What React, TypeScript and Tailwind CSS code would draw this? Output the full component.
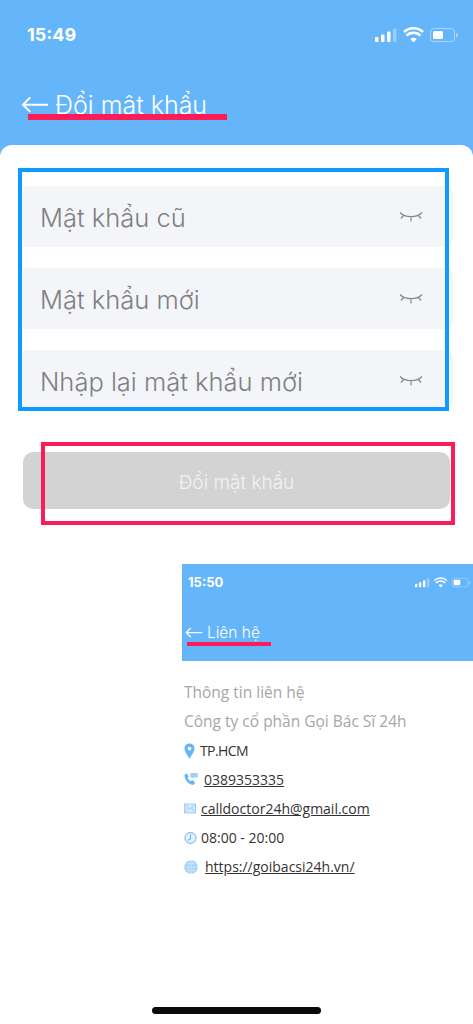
const INTER = "font-['Inter','Liberation_Sans',sans-serif]";
const OPEN = "font-['Open_Sans','Liberation_Sans',sans-serif]";

function StatusIcons({ small }: { small?: boolean }) {
  return (
    <svg width={small ? 56 : 84} height={small ? 11 : 16} viewBox="0 0 84 16" className="block">
      <g fill="#fff">
        <rect x="0" y="10" width="3.5" height="5" rx="1" />
        <rect x="6" y="7.5" width="3.5" height="7.5" rx="1" />
        <rect x="12" y="4.5" width="3.5" height="10.5" rx="1" />
        <rect x="18" y="1.5" width="3.5" height="13.5" rx="1" fill="#fff" opacity="0.35" />
        <path d="M38.5 15.5l-3.2-3.4a4.6 4.6 0 0 1 6.4 0z" />
      </g>
      <path d="M31.5 8.6a10 10 0 0 1 14 0M29 5a14 14 0 0 1 19 0" stroke="#fff" strokeWidth="2.4" fill="none" />
      <rect x="55.5" y="1.5" width="24" height="13" rx="3.5" fill="none" stroke="#fff" strokeOpacity="0.45" />
      <rect x="58" y="4" width="10" height="8" rx="1.5" fill="#fff" />
      <rect x="81" y="6" width="1.6" height="4.5" rx="0.8" fill="#fff" opacity="0.45" />
    </svg>
  );
}

function BackArrow({ width }: { width: number }) {
  return (
    <svg width={width} height={width * 0.62} viewBox="0 0 29 18" fill="none" stroke="#fff" strokeWidth="2" className="block shrink-0">
      <path d="M28 9H2M9.5 1.5L2 9l7.5 7.5" />
    </svg>
  );
}

function EyeClosed() {
  return (
    <svg width="24" height="16" viewBox="0 0 24 16" fill="none" stroke="#85878a" strokeWidth="1.2" className="block shrink-0">
      <path d="M1 3.5C6 9 18 9 23 3.5M4.5 6.5L2 9.5M19.5 6.5L22 9.5M12 8.5V12.5" />
    </svg>
  );
}

function Field({ label }: { label: string }) {
  return (
    <div className="flex h-[61px] items-center justify-between rounded-r-lg bg-[#f4f5f8] pl-[17px] pr-[30px]">
      <span className={`${INTER} relative top-[2px] text-[25.5px] font-light text-[#7f8082]`}>{label}</span>
      <EyeClosed />
    </div>
  );
}

const PinIcon = (
  <svg width="11" height="16" viewBox="0 0 11 16" className="block">
    <path fillRule="evenodd" fill="#64b5f9" d="M5.5 0.5C2.6.5.5 2.7.5 5.5c0 3.5 5 10 5 10s5-6.500 5-10C10.500 2.700 8.400.5 5.500.5zm0 3.200a1.900 1.900 0 1 1 0 3.800 1.900 1.900 0 0 1 0-3.800z" />
  </svg>
);

const PhoneIcon = (
  <svg width="15" height="15" viewBox="0 0 15 15" className="block">
    <path fill="#64b5f9" d="M.5 2.500 3 1l2.200 3.300-1.400 1.300c.7 1.700 2 3 3.700 3.800l1.300-1.300 3.200 2.300-1.500 2.600C6.200 14.500.3 8 .5 2.500z" />
    <path fill="#9fd0f8" d="M7.500.5h6.500a.8.800 0 0 1 .8.800v3.200a.8.800 0 0 1-.8.800H10l-1.500 1.500V5.300h-1a.8.800 0 0 1-.8-.8V1.300a.8.800 0 0 1 .8-.8z" />
  </svg>
);

const MailIcon = (
  <svg width="12" height="11" viewBox="0 0 12 11" className="block">
    <rect x=".5" y="1" width="11" height="9" fill="#d5eafc" stroke="#9fd0f8" />
    <path d="M.5 1.500 6 6l5.500-4.500M.5 9.500 4.300 5M11.500 9.500 7.700 5" fill="none" stroke="#8cc6f7" strokeWidth=".8" />
  </svg>
);

const ClockIcon = (
  <svg width="13" height="14" viewBox="0 0 13 14" className="block">
    <circle cx="6.500" cy="7" r="5.500" fill="#e6f3fe" stroke="#8cc6f7" strokeWidth="1.300" />
    <path d="M6.500 3.500V7.500L4 9.500" fill="none" stroke="#64b5f9" strokeWidth="1.100" />
  </svg>
);

const GlobeIcon = (
  <svg width="14" height="14" viewBox="0 0 14 14" className="block">
    <circle cx="7" cy="7" r="6.800" fill="#9fd0f8" />
    <path d="M.5 7h13M1.500 3.800h11M1.500 10.200h11M7 .3v13.400M7 .3C3 3 3 11 7 13.700M7 .3c4 2.700 4 10.700 0 13.400" fill="none" stroke="#e6f3fe" strokeWidth=".6" />
  </svg>
);

const rows = [
  { icon: PinIcon, text: 'TP.HCM', link: false, cls: 'ml-[2px] -tracking-[0.6px]' },
  { icon: PhoneIcon, text: '0389353335', link: true, cls: 'ml-[6px]' },
  { icon: MailIcon, text: 'calldoctor24h@gmail.com', link: true, cls: 'ml-[3px]' },
  { icon: ClockIcon, text: '08:00 - 20:00', link: false, cls: 'ml-[3px]' },
  { icon: GlobeIcon, text: 'https://goibacsi24h.vn/', link: true, cls: 'ml-[7px]' },
];

export default function App() {
  return (
    <div className="relative h-[1024px] w-[473px] overflow-hidden bg-[#64b5f9]">
      {/* status bar + title */}
      <div className="flex h-[145px] flex-col bg-[#64b5f9] pl-[21px] pr-[14px]">
        <div className="flex items-center justify-between pl-[6px] pt-[23px]">
          <span className={`${INTER} text-[18px] font-bold leading-[24px] text-white`}>15:49</span>
          <StatusIcons />
        </div>
        <div className="mt-[42px] flex items-center gap-[6px]">
          <BackArrow width={28} />
          <span className={`${INTER} text-[25px] font-light leading-[32px] text-white`}>Đổi mật khẩu</span>
        </div>
      </div>

      <div className="h-[879px] rounded-t-[12px] bg-white pt-[41px]">
        <div className="ml-[23px] mr-[20px] flex flex-col gap-[21px]">
          <Field label="Mật khẩu cũ" />
          <Field label="Mật khẩu mới" />
          <Field label="Nhập lại mật khẩu mới" />
        </div>

        <div className="ml-[23px] mt-[41px] flex h-[57px] w-[427px] items-center justify-center rounded-[10px] bg-[#d3d3d3]">
          <span className={`${INTER} relative top-[3px] text-[19px] font-light text-[#f2f2f2]`}>Đổi mật khẩu</span>
        </div>

        {/* inset screenshot */}
        <div className="ml-[182px] mt-[55px]">
          <div className="flex h-[97px] flex-col bg-[#64b5f9] pl-[6px] pr-[2px]">
            <div className="flex items-center justify-between pt-[8px]">
              <span className={`${INTER} text-[13px] font-bold leading-[20px] text-white`}>15:50</span>
              <StatusIcons small />
            </div>
            <div className="-ml-[3px] mt-[30px] flex items-center gap-[4px]">
              <BackArrow width={18} />
              <span className={`${INTER} text-[15.5px] font-light leading-[22px] text-white`}>Liên hệ</span>
            </div>
          </div>

          <div className={`${OPEN} pl-[2px] pt-[17px]`}>
            <p className="text-[15.5px] leading-[29px] text-[#a6a6a6]">Thông tin liên hệ</p>
            <p className="whitespace-nowrap text-[15.5px] leading-[29px] text-[#a6a6a6]">Công ty cổ phần Gọi Bác Sĩ 24h</p>
            {rows.map((r) => (
              <div key={r.text} className="flex h-[29px] items-center">
                <span className="flex w-[14px] justify-start">{r.icon}</span>
                <span className={`${r.cls} whitespace-nowrap text-[14px] text-[#333] ${r.link ? 'underline' : ''}`}>{r.text}</span>
              </div>
            ))}
          </div>
        </div>
      </div>

      {/* annotations drawn on the picture */}
      <div className="absolute left-[28px] top-[114px] h-[6px] w-[199px] bg-[#fb1c58]" />
      <div className="absolute left-[18px] top-[168px] h-[243px] w-[431px] border-[4px] border-[#0d9bff]" />
      <div className="absolute left-[41px] top-[442px] h-[83px] w-[414px] border-[4px] border-[#fb1c58]" />
      <div className="absolute left-[187px] top-[642px] h-[4px] w-[84px] bg-[#fb1c58]" />

      <div className="absolute left-[152px] top-[1007px] h-[7px] w-[169px] rounded-full bg-[#0a0a0a]" />
    </div>
  );
}
